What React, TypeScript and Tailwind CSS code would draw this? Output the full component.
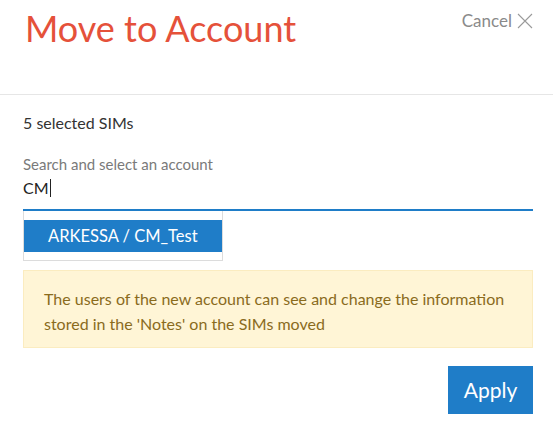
import React from 'react'

const CloseIcon: React.FC = () => (
  <svg width="16" height="16" viewBox="0 0 16 16" className="ml-[5px]">
    <path d="M1 1 L15 15 M15 1 L1 15" stroke="#9a9a9a" strokeWidth="1.1" fill="none" />
  </svg>
)

export default function App() {
  return (
    <div className="w-[553px] h-[435px] bg-white font-['Lato',sans-serif] overflow-hidden">
      {/* header */}
      <div className="flex items-start justify-between h-[95px] border-b border-[#e6e6e6] pl-[25px] pr-[20px]">
        <h1 className="mt-[10px] text-[36px] leading-[36px] font-normal text-[#e5513a]">
          Move to Account
        </h1>
        <button className="mt-[11px] flex items-center text-[17px] leading-[20px] text-[#8a8a8a]">
          Cancel
          <CloseIcon />
        </button>
      </div>

      {/* body */}
      <div className="pl-[23px] pr-[20px]">
        <p className="mt-[18px] text-[16px] leading-[20px] text-[#333]">5 selected SIMs</p>

        <label className="block mt-[21px] text-[15px] leading-[20px] text-[#7a7a7a]">
          Search and select an account
        </label>
        <div className="mt-[2px] pb-[9px] border-b-2 border-[#1f7dc8]">
          <div className="flex items-center h-[24px] text-[16px] leading-[24px] text-[#222]">
            CM
            <span className="ml-[1px] w-px h-[18px] bg-[#222]" />
          </div>
        </div>

        {/* dropdown */}
        <div className="w-[200px] border-x border-b border-[#dcdcdc] pt-[9px] pb-[8px]">
          <div className="h-[32px] bg-[#1f7dc8] pl-[24px] flex items-center text-[16.5px] text-white">
            ARKESSA / CM_Test
          </div>
        </div>

        {/* warning */}
        <div className="mt-[9px] h-[78px] border border-[#fbecc0] bg-[#fff5d6] pl-[20px] pr-[10px] pt-[15px] text-[16px] leading-[25px] text-[#8a6b1d]">
          The users of the new account can see and change the information stored in the 'Notes' on the SIMs moved
        </div>

        <div className="flex justify-end mt-[18px]">
          <button className="w-[85px] h-[48px] bg-[#1f7dc8] text-white text-[21px]">Apply</button>
        </div>
      </div>
    </div>
  )
}
